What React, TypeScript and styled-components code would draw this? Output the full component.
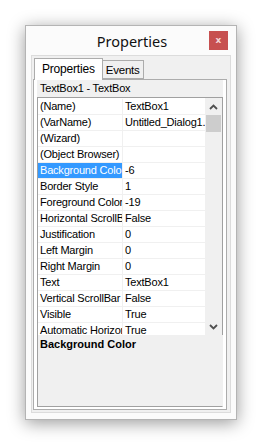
import React from 'react'
import styled, { createGlobalStyle } from 'styled-components';

const GlobalStyle = createGlobalStyle`
    html, body {
        margin: 0;
        padding: 0;
        background: #ffffff;
    }
    body {
        font-family: "Liberation Sans", Arial, sans-serif;
    }
`;

const Page = styled.div`
    width: 262px;
    height: 445px;
    padding: 25px 0 0 25px;
    box-sizing: border-box;
`;

const Window = styled.div`
    width: 212px;
    height: 395px;
    box-sizing: border-box;
    border: 1px solid #b4b4b4;
    background: #fbfbfb;
    box-shadow: 0 3px 16px rgba(0, 0, 0, 0.4);
    display: flex;
    flex-direction: column;
`;

const TitleBar = styled.div`
    height: 29px;
    display: grid;
    grid-template-columns: 1fr auto 1fr;
    align-items: start;
    padding: 0 8px 0 6px;
`;

const Title = styled.div`
    grid-column: 2;
    font-family: "Noto Sans", "Open Sans", sans-serif;
    font-size: 14.5px;
    line-height: 30px;
    color: #111;
    padding-left: 4px;
`;

const CloseButton = styled.div`
    grid-column: 3;
    justify-self: end;
    margin-top: 5px;
    width: 19px;
    height: 19px;
    background: #c75050;
    display: flex;
    align-items: center;
    justify-content: center;
    color: #f3d4d4;
    font-family: "DejaVu Sans", sans-serif;
    font-weight: bold;
    font-size: 9px;
    line-height: 1;
`;

const Client = styled.div`
    flex: 1;
    margin: 0 5px 6px 5px;
    border: 1px solid #dcdcdc;
    background: #f0f0f0;
    padding: 0 3px 2px 1px;
    display: flex;
    flex-direction: column;
`;

const TabStrip = styled.div`
    display: flex;
    align-items: flex-end;
    height: 23px;
    padding-left: 1px;
`;

interface TabProps {
    active?: boolean;
}

const Tab = styled.div<TabProps>`
    height: ${p => p.active ? 21 : 17}px;
    padding: 0 ${p => p.active ? 7 : 3}px 0 ${p => p.active ? 7 : 3}px;
    margin-bottom: ${p => p.active ? -1 : 0}px;
    background: ${p => p.active ? '#ffffff' : '#f0f0f0'};
    border: 1px solid #acacac;
    border-bottom: ${p => p.active ? 'none' : '1px solid #acacac'};
    margin-left: ${p => p.active ? 0 : -1}px;
    font-size: ${p => p.active ? 12 : 11.5}px;
    letter-spacing: -0.2px;
    line-height: ${p => p.active ? 20 : 18}px;
    color: #000;
    z-index: ${p => p.active ? 1 : 0};
`;

const TabPage = styled.div`
    flex: 1;
    border: 1px solid #acacac;
    background: #ffffff;
    padding: 0 3px 2px 3px;
    display: flex;
    flex-direction: column;
    min-height: 0;
`;

const ObjectLabel = styled.div`
    height: 17px;
    background: #f0f0f0;
    font-size: 11px;
    letter-spacing: -0.2px;
    line-height: 17px;
    padding-left: 3px;
    color: #000;
`;

const GridBox = styled.div`
    border: 1px solid #a0a0a0;
    border-bottom: none;
    display: flex;
    height: 237px;
    overflow: hidden;
    background: #ffffff;
`;

const GridRows = styled.div`
    flex: 1;
    padding-top: 1px;
    overflow: hidden;
`;

const Row = styled.div`
    display: grid;
    grid-template-columns: 85px 1fr;
    height: 16px;
    border-bottom: 1px solid #f0f0f0;
    box-sizing: border-box;
`;

interface CellProps {
    selected?: boolean;
}

const Cell = styled.div<CellProps>`
    font-size: 11px;
    letter-spacing: -0.2px;
    line-height: 15px;
    padding-left: 2px;
    white-space: nowrap;
    overflow: hidden;
    text-overflow: clip;
    color: ${p => p.selected ? '#ffffff' : '#000000'};
    background: ${p => p.selected ? '#3399ff' : 'transparent'};
`;

const NameCell = styled(Cell)`
    border-right: 1px solid #f0f0f0;
`;

const ScrollBar = styled.div`
    width: 17px;
    background: #f0f0f0;
    display: flex;
    flex-direction: column;
`;

const ScrollArrow = styled.div`
    height: 17px;
    display: flex;
    align-items: center;
    justify-content: center;
`;

const ScrollTrack = styled.div`
    flex: 1;
    padding: 0 1px;
`;

const ScrollThumb = styled.div`
    height: 17px;
    background: #cdcdcd;
`;

const Description = styled.div`
    flex: 1;
    background: #f0f0f0;
    border: 1px solid #a0a0a0;
    border-top: none;
    border-right-color: #f0f0f0;
    padding: 3px 2px;
    font-size: 11px;
    font-weight: bold;
    line-height: 13px;
    color: #000;
`;

const Chevron: React.FC<{ down?: boolean }> = ({ down }) => (
    <svg width="9" height="6" viewBox="0 0 9 6">
        <polyline
            points={down ? '1,1 4.5,4.5 8,1' : '1,5 4.5,1.5 8,5'}
            fill="none"
            stroke="#505050"
            strokeWidth="1.8"
        />
    </svg>
);

const properties: [string, string][] = [
    ['(Name)', 'TextBox1'],
    ['(VarName)', 'Untitled_Dialog1.'],
    ['(Wizard)', ''],
    ['(Object Browser)', ''],
    ['Background Color', '-6'],
    ['Border Style', '1'],
    ['Foreground Color', '-19'],
    ['Horizontal ScrollBar', 'False'],
    ['Justification', '0'],
    ['Left Margin', '0'],
    ['Right Margin', '0'],
    ['Text', 'TextBox1'],
    ['Vertical ScrollBar', 'False'],
    ['Visible', 'True'],
    ['Automatic Horizontal', 'True'],
];

const selectedName = 'Background Color';

const App: React.FC = () => (
    <>
        <GlobalStyle />
        <Page>
            <Window>
                <TitleBar>
                    <Title>Properties</Title>
                    <CloseButton>x</CloseButton>
                </TitleBar>
                <Client>
                    <TabStrip>
                        <Tab active>Properties</Tab>
                        <Tab>Events</Tab>
                    </TabStrip>
                    <TabPage>
                        <ObjectLabel>TextBox1 - TextBox</ObjectLabel>
                        <GridBox>
                            <GridRows>
                                {properties.map(([name, value]) => (
                                    <Row key={name}>
                                        <NameCell selected={name === selectedName}>{name}</NameCell>
                                        <Cell>{value}</Cell>
                                    </Row>
                                ))}
                            </GridRows>
                            <ScrollBar>
                                <ScrollArrow><Chevron /></ScrollArrow>
                                <ScrollTrack><ScrollThumb /></ScrollTrack>
                                <ScrollArrow><Chevron down /></ScrollArrow>
                            </ScrollBar>
                        </GridBox>
                        <Description>{selectedName}</Description>
                    </TabPage>
                </Client>
            </Window>
        </Page>
    </>
)

export default App;
